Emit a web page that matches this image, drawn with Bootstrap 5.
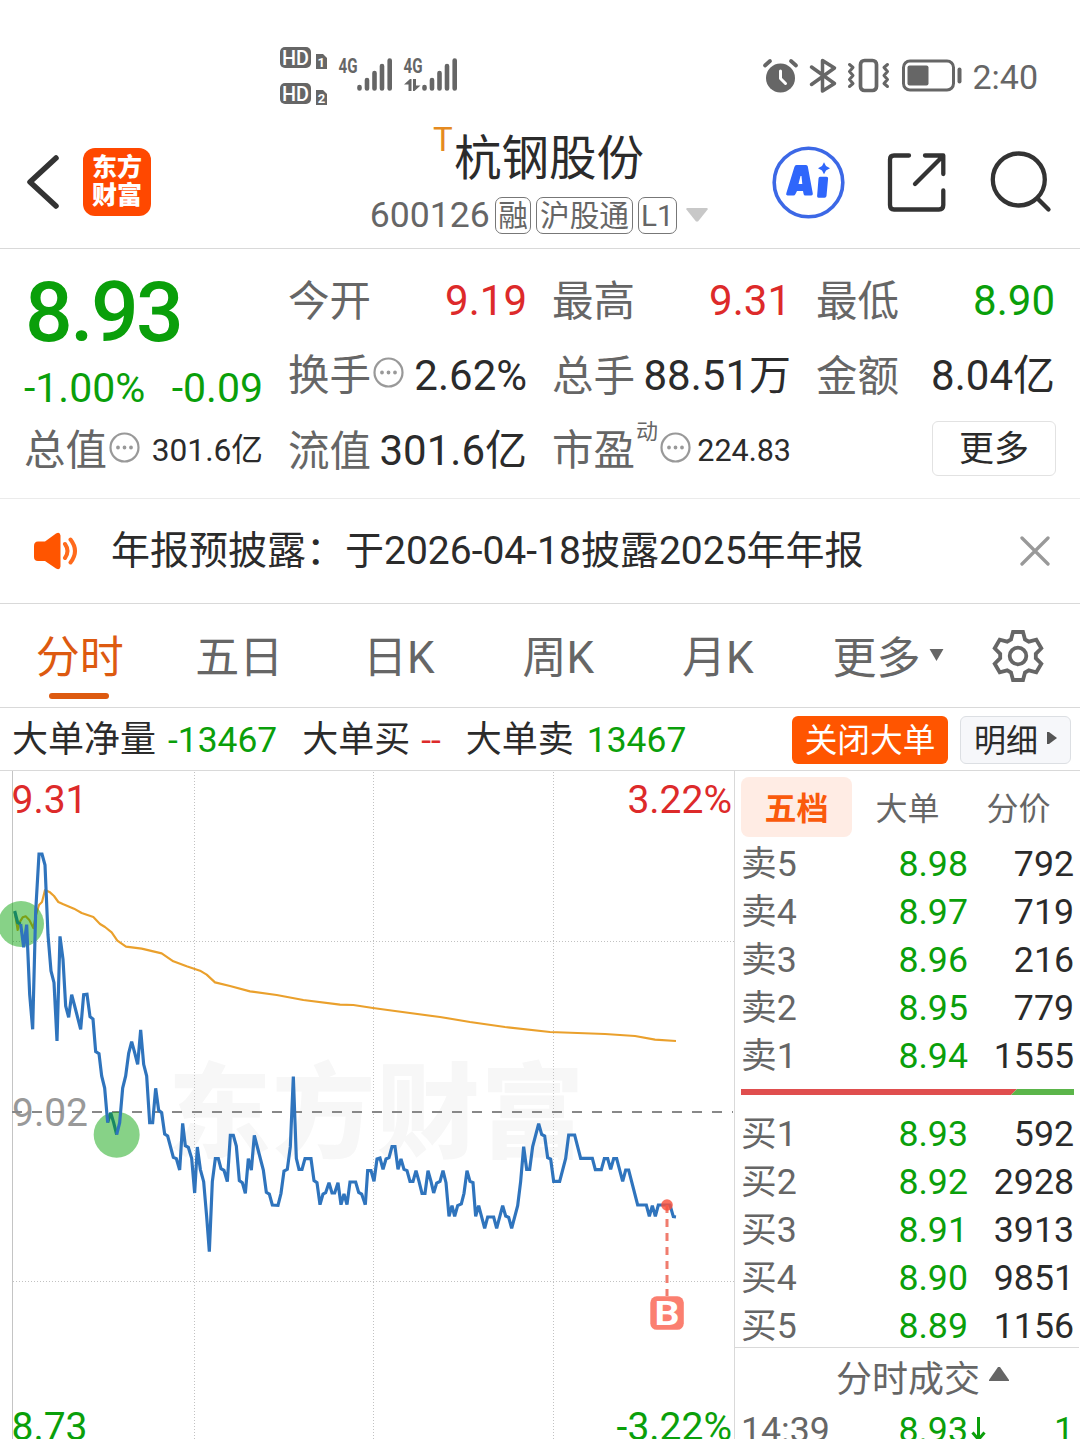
<!DOCTYPE html>
<html lang="zh-CN">
<head>
<meta charset="utf-8">
<meta name="viewport" content="width=device-width, initial-scale=1">
<title>杭钢股份 600126</title>
<link rel="stylesheet" href="https://cdn.jsdelivr.net/npm/bootstrap@5.3.0/dist/css/bootstrap.min.css">
<style>
:root{--ink:#2b2b2b;--mut:#666;--up:#dd2a2a;--dn:#0a9f0a;--or:#ff5500;--ln:#d9d9d9}
html,body{height:1439px;overflow:hidden}
body{font-family:Roboto,"Noto Sans CJK SC",sans-serif;color:var(--ink);background:#fff;width:1080px}
body>*{flex-shrink:0}
svg{display:block;flex:none}
svg text{font-family:Roboto,"Noto Sans CJK SC",sans-serif}
.up{color:var(--up)}.dn{color:var(--dn)}.mut{color:var(--mut)}
.status{height:120px;padding:0 42px 0 280px}
.clock{font-size:34px;line-height:40px;color:var(--mut);margin:33px 0 0 10px}
.top-head{height:129px;border-bottom:1px solid var(--ln);padding-bottom:5px}
.head-l{width:354px;padding-left:26px;gap:23px}
.head-c{width:370px}
.head-r{width:356px;padding-left:48px}
.applogo{width:68px;height:68px;border-radius:12px;background:#ff4800;color:#fff;font-weight:900;font-size:25px;line-height:28px;padding-top:6px}
.stock-name{font-size:47.5px;line-height:60px;margin:9px 0 0 20px}
.stock-name span{font-size:33px;line-height:30px;color:#e58a20;left:-21px;top:-4px}
.code-row{font-size:35.6px;line-height:40px;height:40px;gap:5px;margin-top:6px}
.tagbox{border:1.5px solid #777;border-radius:7px;font-size:29.7px;line-height:35px;height:37px;padding:0 2.5px}
.quote{height:250px;border-bottom:1px solid #ebebeb;padding:14px 25px 0;grid-template-columns:repeat(4,238px);grid-template-rows:repeat(3,75px);column-gap:26px}
.cell{font-size:42px;line-height:75px;white-space:nowrap}
.cell .lab{color:var(--mut);font-size:41.5px;line-height:78px;height:75px;margin-left:-1px}
.cell svg{margin:-6px 0 0 2px}
.sm-val{font-size:31.7px}
.bigbox{grid-row:span 2}
.bigprice{font-size:84px;line-height:100px;height:98px;font-weight:500;letter-spacing:-2.6px}
.pct{font-size:41px;line-height:54px;margin-left:-1px}
.dyn{font-size:22px;line-height:24px;margin:-37px 0 0 1px;color:var(--mut)}
.more-btn{width:124px;height:55px;border:1.5px solid #e2e2e2;border-radius:6px;font-size:35px;line-height:55px;margin:-5px -1px 0 0}
.notice{height:105px;border-bottom:1px solid var(--ln);padding:0 30px 0 34px;font-size:39px}
.notice p{margin:0 0 0 33px;line-height:62px}
.ktabs{height:104px;border-bottom:1px solid var(--ln);font-size:44px;color:var(--mut)}
.ktabs .ktab{width:159.5px;line-height:109px;height:103px;text-align:center}
.ktabs .on{color:#dd5a10}
.ktabs .on::after{content:"";position:absolute;left:49px;bottom:8px;width:60px;height:6px;border-radius:3px;background:#dd5a10}
.big{height:63px;border-bottom:1px solid var(--ln);padding:2px 9px 0 12px;font-size:36px;white-space:nowrap}
.big>span{line-height:60px}
.big .up,.big .dn{font-size:35.4px}
.big .b1{background:var(--or);color:#fff;width:156px;height:48px;border-radius:6px;font-size:32.7px;line-height:51px}
.big .b2{background:#f6f7fa;border:1.5px solid #dcdfe3;width:111px;height:48px;border-radius:6px;font-size:32px;line-height:48px;gap:9px}
.b2 b{font-weight:400;padding-top:2px}
.book{width:345px;padding-left:6px;border-left:1px solid var(--ln)}
.btabs{width:333px;height:60px;margin-top:6px;font-size:32px;line-height:64px;color:var(--mut)}
.btabs div{width:111px;text-align:center}
.btabs .on{background:#ffece4;border-radius:8px;color:#fa5a0c;font-weight:700}
.lv{width:333px;height:48px;font-size:35.7px;line-height:50px}
.lv span:nth-child(1){width:100px;color:var(--mut)}
.lv span:nth-child(2){width:127px;text-align:right;color:var(--dn)}
.lv span:nth-child(3){width:106px;text-align:right}
.deal-h{border-top:1px solid var(--ln);margin:-2px 0 -3px -6px;height:61px;font-size:36px;color:var(--mut);gap:9px;padding-left:31px}
.deal-h b{font-weight:400;padding-top:4px}
</style>
<script src="https://cdn.jsdelivr.net/npm/bootstrap@5.3.0/dist/js/bootstrap.bundle.min.js"></script>
</head>
<body class="d-flex flex-column">

<div class="status d-flex justify-content-between">
  <svg width="180" height="120" viewBox="280 0 180 120" fill="#666">
    <rect x="280" y="47" width="31" height="21" rx="5"/><rect x="280" y="83" width="31" height="21" rx="5"/>
    <g fill="#fff" font-size="20" font-weight="500"><text x="282" y="64.700" textLength="27" lengthAdjust="spacingAndGlyphs">HD</text><text x="282" y="100.700" textLength="27" lengthAdjust="spacingAndGlyphs">HD</text></g>
    <path d="M316 54h7l4 4v11h-11zM316 90h7l4 4v11h-11z"/>
    <g fill="#fff" font-size="13" font-weight="700"><text x="317.500" y="66.500">1</text><text x="317.700" y="102.500">2</text></g>
    <g font-size="21" font-weight="700"><text x="338.500" y="73" textLength="19" lengthAdjust="spacingAndGlyphs">4G</text><text x="403.500" y="73" textLength="19" lengthAdjust="spacingAndGlyphs">4G</text></g>
    <g stroke="#666" stroke-width="4.600" stroke-linecap="round"><path d="M359.500 87v1.500M367 80v8.500M374.500 73v15.500M382 66v22.500M389.700 60.500v28M424.500 87v1.500M432 80v8.500M439.500 73v15.500M447 66v22.500M454.700 60.500v28"/></g>
    <path d="M404 84.500l6-5.500h1.500v12h-3v-6.500zM413 79h3v6.500h4.500l-6 5.500H413z"/>
  </svg>
  <div class="d-flex align-items-center">
    <svg width="200" height="120" viewBox="762 0 200 120" fill="none" stroke="#666" stroke-linecap="round" stroke-linejoin="round">
      <circle cx="780.500" cy="78" r="14.500" fill="#666" stroke="none"/>
      <path stroke-width="3.800" d="M765 65.500l5-4.500M796 65.500l-5-4.500"/>
      <path stroke="#fff" stroke-width="3" d="M780.500 71v7.500l5 5"/>
      <path stroke-width="3.500" d="M811.500 67l23 16.500L822.500 91V60.500L834.500 68l-23 16.500"/>
      <rect x="860.500" y="60.500" width="16" height="30" rx="4" stroke-width="3.700"/>
      <path stroke-width="3" d="M849.500 64.500l3.500 3-3.500 4 3.500 4-3.500 4 3.500 4-3.500 3M887.500 64.500l-3.500 3 3.500 4-3.500 4 3.500 4-3.500 4 3.500 3"/>
      <rect x="903.500" y="61" width="50" height="29" rx="6.500" stroke-width="3"/>
      <rect x="907.500" y="65.500" width="21" height="20" rx="2" fill="#666" stroke="none"/>
      <path stroke-width="4" d="M959.500 69.500v12"/>
    </svg>
    <div class="clock">2:40</div>
  </div>
</div>

<header class="top-head d-flex">
  <div class="head-l d-flex align-items-center">
    <svg width="34" height="56" viewBox="0 0 34 56" fill="none" stroke="#333" stroke-width="5.500" stroke-linecap="round" stroke-linejoin="round"><path d="M30 4L4 28l26 24"/></svg>
    <div class="applogo text-center">东方<br>财富</div>
  </div>
  <div class="head-c d-flex flex-column align-items-center">
    <div class="stock-name position-relative"><span class="position-absolute">T</span>杭钢股份</div>
    <div class="code-row d-flex align-items-center mut"><span>600126</span><span class="tagbox">融</span><span class="tagbox">沪股通</span><span class="tagbox">L1</span>
      <svg width="22" height="14" viewBox="0 0 22 14" class="ms-1"><path d="M1 0h20l1 1-10 12.500h-2L0 1z" fill="#c8c8c8"/></svg>
    </div>
  </div>
  <div class="head-r d-flex align-items-center">
    <svg width="280" height="80" viewBox="772 141 280 80" fill="none" stroke="#333" stroke-width="4.300" stroke-linecap="round" stroke-linejoin="round">
      <circle cx="808.500" cy="181.500" r="34.300" stroke="#3c68e6" stroke-width="3.600"/>
      <g stroke="none" fill="#2f66fb">
        <path fill-rule="evenodd" d="M796.500 164h9.500q1.500 0 1.800 1.500l5 27q.2 2-1.500 2h-6q-1.500 0-1.700-1.500l-.6-3h-6l-1.500 3q-.6 1.500-2.200 1.500h-5.800q-2-.3-1.200-2.200l8-26q.6-2.300 2.200-2.300zM800.500 175l-2 8h3.800l-.8-8z"/>
        <path d="M820 175.800h6.500q1.800 0 1.600 1.800l-1.600 17.400q-.3 1.700-2 1.700h-6q-1.600 0-1.400-1.700l1.400-17.500q.2-1.700 1.500-1.700z"/>
        <path d="M824 161.300l2 3.700 4 2.200-4 2.200-2 3.800-2-3.800-4-2.200 4-2.200z"/>
      </g>
      <path d="M909 154.500h-15q-4 0-4 4V204q0 4.500 4 4.500h45q4.300 0 4.300-4.500v-14.500M925 154.500h18.300V173M942.500 155.500L915 183"/>
      <circle cx="1018.800" cy="178.500" r="26"/><path d="M1037.500 197.500l11 11"/>
    </svg>
  </div>
</header>

<section class="quote d-grid">
  <div class="bigbox dn"><div class="bigprice">8.93</div><div class="pct d-flex justify-content-between"><span>-1.00%</span><span>-0.09</span></div></div>
  <div class="cell d-flex justify-content-between"><span class="lab">今开</span><span class="up">9.19</span></div>
  <div class="cell d-flex justify-content-between"><span class="lab">最高</span><span class="up">9.31</span></div>
  <div class="cell d-flex justify-content-between"><span class="lab">最低</span><span class="dn">8.90</span></div>
  <div class="cell d-flex justify-content-between"><span class="lab d-flex align-items-center">换手<svg width="31" height="31" viewBox="0 0 31 31"><circle cx="15.500" cy="15.500" r="14" fill="none" stroke="#999" stroke-width="2.200"/><path d="M9 15.500h.01M15.500 15.500h.01M22 15.500h.01" stroke="#999" stroke-width="3.800" stroke-linecap="round"/></svg></span><span>2.62%</span></div>
  <div class="cell d-flex justify-content-between"><span class="lab">总手</span><span>88.51万</span></div>
  <div class="cell d-flex justify-content-between"><span class="lab">金额</span><span>8.04亿</span></div>
  <div class="cell d-flex justify-content-between"><span class="lab d-flex align-items-center">总值<svg width="31" height="31" viewBox="0 0 31 31"><circle cx="15.500" cy="15.500" r="14" fill="none" stroke="#999" stroke-width="2.200"/><path d="M9 15.500h.01M15.500 15.500h.01M22 15.500h.01" stroke="#999" stroke-width="3.800" stroke-linecap="round"/></svg></span><span class="sm-val">301.6亿</span></div>
  <div class="cell d-flex justify-content-between"><span class="lab">流值</span><span>301.6亿</span></div>
  <div class="cell d-flex justify-content-between"><span class="lab d-flex align-items-center">市盈<span class="dyn">动</span><svg width="31" height="31" viewBox="0 0 31 31"><circle cx="15.500" cy="15.500" r="14" fill="none" stroke="#999" stroke-width="2.200"/><path d="M9 15.500h.01M15.500 15.500h.01M22 15.500h.01" stroke="#999" stroke-width="3.800" stroke-linecap="round"/></svg></span><span class="sm-val" style="font-size:30.500px">224.83</span></div>
  <div class="cell d-flex justify-content-end align-items-center"><div class="more-btn text-center">更多</div></div>
</section>

<div class="notice d-flex align-items-center">
  <svg width="44" height="38" viewBox="0 0 44 38"><path d="M4 9.500h7L22 1.500q4-2 4.500 2v31q-.5 4-4.500 2L11 29H4q-4 0-4-4V14q0-4.500 4-4.500z" fill="#ff5500"/><path d="M31 12q5 7 0 14M36.500 7.500q9 11.500 0 23" fill="none" stroke="#ff6a1c" stroke-width="4" stroke-linecap="round"/></svg>
  <p>年报预披露：于2026-04-18披露2025年年报</p>
  <svg class="ms-auto" width="30" height="30" viewBox="0 0 30 30"><path d="M2 2l26 26M28 2L2 28" stroke="#999" stroke-width="3.300" stroke-linecap="round"/></svg>
</div>

<nav class="ktabs d-flex align-items-center">
  <div class="ktab on position-relative">分时</div><div class="ktab">五日</div><div class="ktab">日K</div><div class="ktab">周K</div><div class="ktab">月K</div>
  <div class="d-flex align-items-center" style="padding-left:35px"><span style="padding-top:6px">更多</span><svg width="15" height="13" viewBox="0 0 15 14" style="margin-left:8px"><path d="M0 0h15L7.500 13z" fill="#666"/></svg></div>
  <svg class="ms-auto" style="margin-right:35px" width="54" height="54" viewBox="-27 -27 54 54" fill="none" stroke="#666" stroke-width="3.800"><path d="M-7-16.500L-5-24H5L7-16.500 10.800-14.300 18.300-16.300 23.300-7.700 17.800-2.200V2.200L23.300 7.700 18.300 16.300 10.800 14.300 7 16.500 5 24H-5L-7 16.500-10.800 14.300-18.300 16.300-23.300 7.700-17.800 2.200V-2.200L-23.300-7.700-18.300-16.300-10.800-14.300z"/><circle r="8.300"/></svg>
</nav>

<div class="big d-flex align-items-center">
  <span>大单净量</span><span class="dn" style="margin-left:12px">-13467</span>
  <span style="margin-left:25px">大单买</span><span class="up" style="margin-left:11px">--</span>
  <span style="margin-left:25px">大单卖</span><span class="dn" style="margin-left:13px">13467</span>
  <div class="b1 text-center ms-auto">关闭大单</div>
  <div class="b2 d-flex align-items-center justify-content-center" style="margin-left:12px"><b>明细</b><svg width="10" height="14" viewBox="0 0 10 14" style="margin-top:-4px"><path d="M0 1h2l8 6-8 6H0z" fill="#555"/></svg></div>
</div>

<main class="d-flex overflow-hidden" style="height:668px">
  <svg width="734" height="668" viewBox="0 771 734 668" font-size="39">
    <text x="168" y="1150" font-size="103" font-weight="900" fill="#f7f7f7" textLength="416">东方财富</text>
    <path d="M12.500 771V1439" stroke="#c4c4c4"/>
    <path d="M194.500 772V1439M373.500 772V1439M553.500 772V1439M13 941.500H734M13 1281.500H734" stroke="#c2c2c2" stroke-dasharray="1 2"/>
    <text x="12" y="1126" fill="#999">9.02</text>
    <path d="M12 1112H733" stroke="#888" stroke-width="2" stroke-dasharray="10 10"/>
    <g transform="translate(0 840) scale(.33333)" fill="none" stroke-linejoin="round">
      <polyline stroke="#eaa02c" stroke-width="6.500" points="44,215 53,270 60,245 68,232 77,229 88,240 100,264 108,225 117,195 126,186 135,150 150,157 162,168 175,186 190,193 222,206 245,219 280,231 300,252 315,261 335,277 352,302 378,320 425,326 485,340 520,364 560,379 600,392 620,404 645,427 690,438 750,454 830,465 910,480 1020,494 1060,495 1119,504 1185,513 1320,531 1410,546 1515,561 1650,576 1815,582 1905,588 1965,599 2028,603"/>
      <g stroke="#2f74bd" stroke-width="9.500" stroke-linejoin="miter" stroke-miterlimit="1.500">
      <polyline points="44,213 53,248 62,252"/>
      <polyline points="323,848 332,818 341,848 350,884"/>
      </g>
      <circle cx="63" cy="252" r="69" fill="#00a000" fill-opacity=".47"/>
      <circle cx="350" cy="884" r="69" fill="#00a000" fill-opacity=".47"/>
      <g stroke="#2f74bd" stroke-width="9.500" stroke-linejoin="miter" stroke-miterlimit="1.500">
      <polyline points="62,252 71,322 80,254 89,463 98,568 107,215 117,42 126,42 135,75 144,285 153,393 162,428 171,603 180,289 189,358 197,498 206,532 215,464 224,498 242,568 251,464 261,463 270,530 279,537 287,635 297,641 305,708 314,744 323,848"/>
      <polyline points="350,884 359,848 368,744 377,708 386,640 395,605 404,638 413,673 422,570 431,673 440,708 449,848 458,848 467,745 476,811 485,818 494,882 503,888 520,952 529,956 539,990 548,850 556,917 565,922 575,955 584,1059 592,921 601,988 611,1025 620,1130 628,1235 637,1025 646,956 655,956 663,986 672,991 682,1025 691,886 700,886 709,918 718,1022 727,1028 736,1060 745,956 754,990 763,886 772,921 790,990 799,1057 808,1062 817,1095 834,1096 843,1060 852,993 862,988 871,920 880,710 889,955 897,988 906,988 915,956 933,956 942,1022 951,1028 960,1094 969,1062 977,1058 987,1028 996,1059 1004,1059 1014,1028 1023,1094 1032,1062 1041,1094 1050,1026 1067,1026 1076,1057 1085,1062 1096,1094"/>
      </g>
    </g>
    <polyline transform="translate(365 1040) scale(.33333)" fill="none" stroke="#2f74bd" stroke-width="9.500" stroke-miterlimit="1.500" points="1,494 8,392 18,392 27,424 36,357 45,354 54,388 63,357 72,353 81,320 90,320 99,388 108,357 117,388 126,392 135,424 144,424 153,392 162,424 171,460 180,460 189,392 198,424 206,459 215,429 225,424 234,392 243,428 252,529 261,497 269,529 278,497 289,492 297,460 306,392 315,424 324,428 332,529 341,497 359,565 368,531 386,531 395,565 413,497 422,528 431,532 440,565 458,497 467,424 476,320 485,388 494,388 503,320 521,251 530,283 539,288 548,353 557,357 566,424 584,424 602,355 611,285 629,285 647,355 682,355 691,389 709,389 718,356 728,356 737,388 746,356 755,356 773,424 782,390 791,390 818,495 844,495 853,529 862,497 871,529 880,495 915,495 925,530 933,531"/>
    <path d="M667 1204V1296" stroke="#f07c6e" stroke-width="3" stroke-dasharray="8 6" stroke-dashoffset="-1"/>
    <circle cx="667" cy="1205" r="5.800" fill="#f9503c" fill-opacity=".82"/>
    <rect x="650.300" y="1296.300" width="33.500" height="33.500" rx="6.500" fill="#fb7f70"/>
    <text x="667" y="1325" text-anchor="middle" font-size="34" font-weight="700" fill="#fff" textLength="25" lengthAdjust="spacingAndGlyphs">B</text>
    <text x="11.500" y="813" fill="#dd2a2a">9.31</text>
    <text x="732" y="813" text-anchor="end" fill="#dd2a2a">3.22%</text>
    <text x="11.500" y="1439.500" fill="#0a9f0a">8.73</text>
    <text x="732" y="1439.500" text-anchor="end" fill="#0a9f0a">-3.22%</text>
  </svg>
  <aside class="book d-flex flex-column flex-shrink-0">
    <div class="btabs d-flex flex-shrink-0"><div class="on">五档</div><div>大单</div><div>分价</div></div>
    <div style="margin-top:2px">
      <div class="lv d-flex"><span>卖5</span><span>8.98</span><span>792</span></div>
      <div class="lv d-flex"><span>卖4</span><span>8.97</span><span>719</span></div>
      <div class="lv d-flex"><span>卖3</span><span>8.96</span><span>216</span></div>
      <div class="lv d-flex"><span>卖2</span><span>8.95</span><span>779</span></div>
      <div class="lv d-flex"><span>卖1</span><span>8.94</span><span>1555</span></div>
    </div>
    <svg width="333" height="6" viewBox="0 0 333 6" style="margin:10px 0 14px"><path d="M0 0H276L270 6H0z" fill="#e04e4e"/><path d="M276 0H333V6H270z" fill="#5bb54a"/></svg>
    <div>
      <div class="lv d-flex"><span>买1</span><span>8.93</span><span>592</span></div>
      <div class="lv d-flex"><span>买2</span><span>8.92</span><span>2928</span></div>
      <div class="lv d-flex"><span>买3</span><span>8.91</span><span>3913</span></div>
      <div class="lv d-flex"><span>买4</span><span>8.90</span><span>9851</span></div>
      <div class="lv d-flex"><span>买5</span><span>8.89</span><span>1156</span></div>
    </div>
    <div class="deal-h d-flex align-items-center justify-content-center flex-shrink-0"><b>分时成交</b><svg width="20" height="14" viewBox="0 0 20 14" style="margin-top:-8px"><path d="M9 0h2l9 13v1H0v-1z" fill="#666"/></svg></div>
    <div class="lv d-flex flex-shrink-0"><span>14:39</span><span class="d-flex justify-content-end" style="width:146px">8.93<svg width="17" height="30" viewBox="0 0 17 30" style="margin:9px 0 0 2px"><path d="M8.500 3v22M2.500 18.500l6 7 6-7" fill="none" stroke="#0a9f0a" stroke-width="3"/></svg></span><span class="dn" style="width:87px">1</span></div>
  </aside>
</main>
</body>
</html>
